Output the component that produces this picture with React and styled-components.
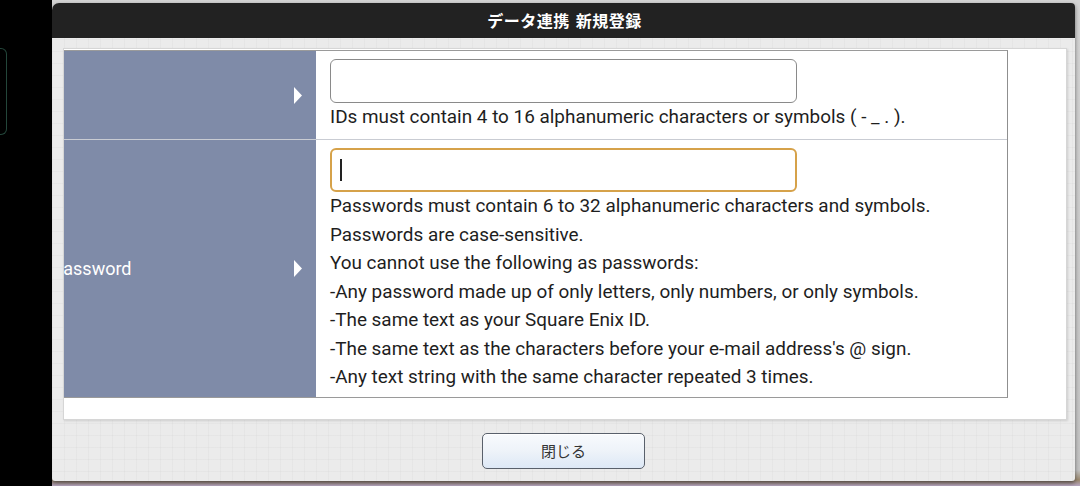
import React from "react";
import styled, { createGlobalStyle } from "styled-components";

const GlobalStyle = createGlobalStyle`
  html, body {
    margin: 0;
    padding: 0;
    background: #000;
    overflow: hidden;
  }
  * {
    box-sizing: border-box;
  }
`;

const Page = styled.div`
  width: 1080px;
  height: 486px;
  display: flex;
  background: #000;
  font-family: Roboto, "Noto Sans CJK JP", sans-serif;
`;

const LeftRail = styled.div`
  width: 52px;
  flex: none;
  padding-top: 48px;
`;

const GreenTab = styled.div`
  width: 7px;
  height: 87px;
  border: 1px solid #23463a;
  border-left: none;
  border-radius: 0 6px 6px 0;
`;

const Backdrop = styled.div`
  flex: 1;
  padding: 3px 5px 5px 0;
  background: linear-gradient(
    to bottom,
    #d4d4d4 0px,
    #c4c4c4 470px,
    #9c8a70 480px,
    #b7a6c2 486px
  );
`;

const Dialog = styled.div`
  height: 478px;
  display: flex;
  flex-direction: column;
  border-radius: 7px 4px 3px 3px;
  overflow: hidden;
  background-color: #ebebeb;
  background-image: repeating-linear-gradient(
      to right,
      rgba(0, 0, 0, 0.025) 0px,
      rgba(0, 0, 0, 0.025) 1px,
      transparent 1px,
      transparent 12px
    ),
    repeating-linear-gradient(
      to bottom,
      rgba(0, 0, 0, 0.025) 0px,
      rgba(0, 0, 0, 0.025) 1px,
      transparent 1px,
      transparent 12px
    );
  box-shadow: 0 2px 4px rgba(0, 0, 0, 0.5);
`;

const TitleBar = styled.div`
  height: 35px;
  flex: none;
  display: flex;
  align-items: center;
  justify-content: center;
  background: #222;
  color: #fff;
  font-family: "DejaVu Serif", "Noto Sans CJK JP", serif;
  font-weight: 700;
  font-size: 16px;
  letter-spacing: 0.5px;
  padding: 0 0 2px 2px;
`;

const Body = styled.div`
  flex: 1;
  display: flex;
  flex-direction: column;
  padding: 10px 8px 0 11px;
`;

const Panel = styled.div`
  height: 372px;
  flex: none;
  background: #fff;
  border: 1px solid #d6d6d6;
  box-shadow: 1px 1px 2px rgba(0, 0, 0, 0.12);
  padding: 1px 0 0 0;
`;

const Table = styled.div`
  width: 944px;
  border-top: 1px solid #9a9a9a;
  border-right: 1px solid #8f8f8f;
  border-bottom: 1px solid #9a9a9a;
  display: flex;
  flex-direction: column;
`;

const Row = styled.div`
  display: flex;
  height: ${(p) => p.$h}px;
  & + & {
    border-top: 1px solid #c9ccd3;
  }
`;

const Label = styled.div`
  width: 252px;
  flex: none;
  background: #7f8ba8;
  color: #fff;
  font-size: 18px;
  display: flex;
  align-items: center;
  justify-content: space-between;
  padding-right: 14px;
  overflow: hidden;
  white-space: nowrap;
`;

const LabelText = styled.span`
  margin-left: -12px;
`;

const Arrow = styled.svg`
  width: 9px;
  height: 17px;
  flex: none;
`;

const Cell = styled.div`
  flex: 1;
  padding: 8px 0 0 14px;
  color: #1e1e1e;
`;

const Input = styled.div`
  width: 467px;
  height: 44px;
  border: ${(p) => (p.$focus ? "2px solid #d6a24a" : "1px solid #8a8a8a")};
  border-radius: 6px;
  background: #fff;
  display: flex;
  align-items: center;
  padding-left: 8px;
`;

const Caret = styled.div`
  width: 1.5px;
  height: 22px;
  background: #222;
`;

const Help = styled.div`
  font-size: 18.9px;
  line-height: 28.5px;
  white-space: nowrap;
`;

const Footer = styled.div`
  flex: 1;
  display: flex;
  justify-content: center;
  padding-top: 13px;
  padding-right: 3px;
`;

const Button = styled.button`
  width: 163px;
  height: 36px;
  border: 1px solid #59606b;
  border-radius: 5px;
  background: linear-gradient(to bottom, #f8fafd 0%, #eef3f9 50%, #dde8f6 100%);
  box-shadow: inset 0 1px 0 #fff;
  font-family: "Noto Sans CJK JP", sans-serif;
  font-size: 15px;
  color: #333;
  padding: 0 0 2px;
`;

const ArrowIcon = () => (
  <Arrow viewBox="0 0 9 17">
    <polygon points="1,0 9,8.5 1,17" fill="#fff" />
  </Arrow>
);

export default function App() {
  return (
    <>
      <GlobalStyle />
      <Page>
        <LeftRail>
          <GreenTab />
        </LeftRail>
        <Backdrop>
          <Dialog>
            <TitleBar>データ連携 新規登録</TitleBar>
            <Body>
              <Panel>
                <Table>
                  <Row $h={88}>
                    <Label>
                      <LabelText />
                      <ArrowIcon />
                    </Label>
                    <Cell>
                      <Input />
                      <Help>
                        IDs must contain 4 to 16 alphanumeric characters or
                        symbols ( - _ . ).
                      </Help>
                    </Cell>
                  </Row>
                  <Row $h={258}>
                    <Label>
                      <LabelText>Password</LabelText>
                      <ArrowIcon />
                    </Label>
                    <Cell>
                      <Input $focus>
                        <Caret />
                      </Input>
                      <Help>
                        Passwords must contain 6 to 32 alphanumeric characters
                        and symbols.
                        <br />
                        Passwords are case-sensitive.
                        <br />
                        You cannot use the following as passwords:
                        <br />
                        -Any password made up of only letters, only numbers, or
                        only symbols.
                        <br />
                        -The same text as your Square Enix ID.
                        <br />
                        -The same text as the characters before your e-mail
                        address's @ sign.
                        <br />
                        -Any text string with the same character repeated 3
                        times.
                      </Help>
                    </Cell>
                  </Row>
                </Table>
              </Panel>
              <Footer>
                <Button>閉じる</Button>
              </Footer>
            </Body>
          </Dialog>
        </Backdrop>
      </Page>
    </>
  );
}
